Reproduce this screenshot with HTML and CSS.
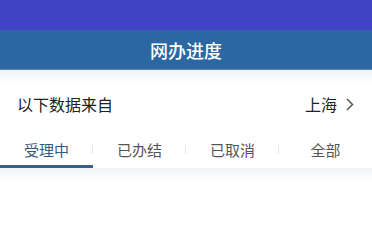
FILE: index.html
```html
<!DOCTYPE html>
<html lang="zh-CN">
<head>
<meta charset="utf-8">
<title>网办进度</title>
<link rel="stylesheet" href="styles.css">
</head>
<body>
<div class="statusbar"></div>
<header class="header"><h1 class="title">网办进度</h1></header>
<section class="source">
  <span class="source-label">以下数据来自</span>
  <span class="source-city">上海<svg class="chev" width="8" height="13" viewBox="0 0 8 13"><polyline points="1,1 6.5,6.5 1,12" fill="none" stroke="#555" stroke-width="1.5"/></svg></span>
</section>
<nav class="tabs">
  <div class="tab active">受理中</div>
  <div class="tab">已办结</div>
  <div class="tab">已取消</div>
  <div class="tab">全部</div>
</nav>
<div class="shade"></div>
</body>
</html>
```
FILE: styles.css
```css
* { box-sizing: border-box; }
html, body { margin: 0; padding: 0; background: #fff; }
body { font-family: "Noto Sans CJK SC", "Noto Sans", sans-serif; width: 372px; overflow: hidden; }
.statusbar { height: 30px; background: #4044c4; }
.header { height: 40px; background: #2a67a3; border-bottom: 1px solid #5d83aa; display: flex; align-items: center; justify-content: center; }
.title { margin: 0; color: #fff; font-size: 18px; font-weight: 500; line-height: 20px; letter-spacing: 0; }
.source { height: 60px; padding: 24px 18px 16px 17px; display: flex; justify-content: space-between; align-items: flex-start; background: linear-gradient(#eef3f9 0, #fff 14px); }
.source-label, .source-city { font-size: 16px; line-height: 20px; color: #222; }
.source-city { display: flex; align-items: center; gap: 9px; }
.chev { display: block; }
.tabs { display: flex; height: 38px; }
.tab { position: relative; flex: 1; display: flex; align-items: center; justify-content: center; padding-top: 3px; border-bottom: 3px solid transparent; font-size: 15px; color: #555; }
.tab.active { color: #35597f; border-bottom-color: #38608b; }
.tab:not(:last-child)::after { content: ""; position: absolute; right: 0; top: 15px; width: 1px; height: 9px; background: #e6e6e6; }
.shade { height: 14px; background: linear-gradient(#eff4f9, #fff); }
```
